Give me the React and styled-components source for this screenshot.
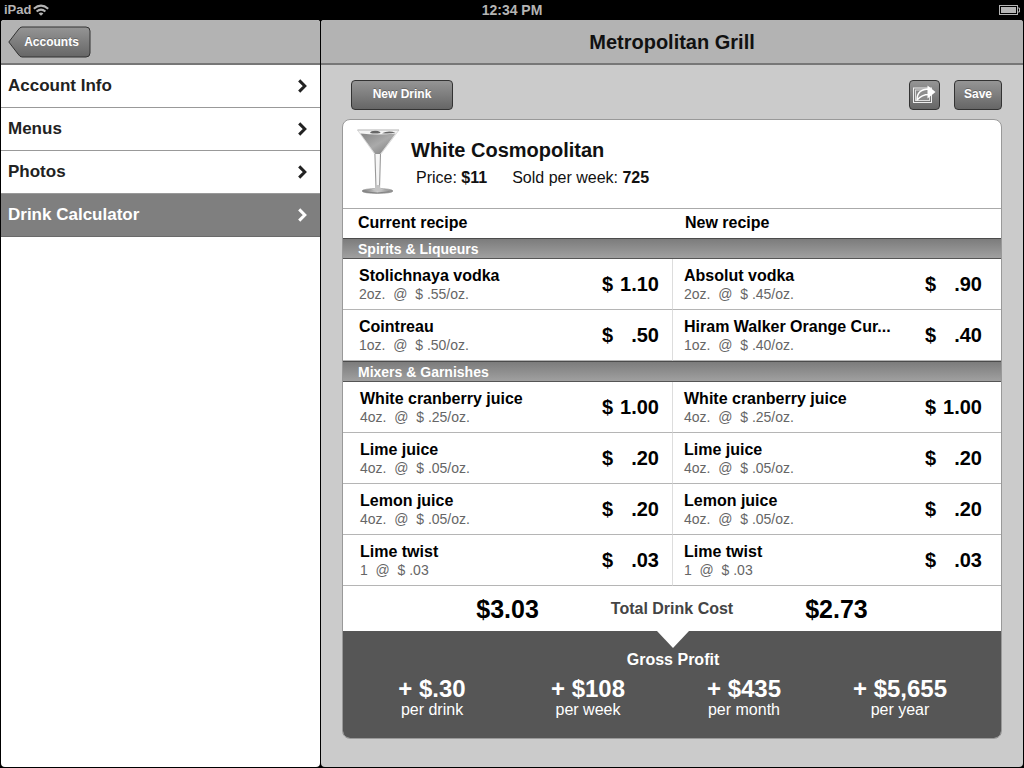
import React from 'react';
import styled, { createGlobalStyle } from 'styled-components';

const GlobalStyle = createGlobalStyle`
  *, *::before, *::after { box-sizing: border-box; }
  html, body, #root { height: 100%; }
  body {
    margin: 0;
    background: #000;
    color: #111;
    font-family: "Liberation Sans", Arial, sans-serif;
  }
  h1, h2, h3, p, dl, dd, ul { margin: 0; padding: 0; }
`;

const Screen = styled.div`
  display: flex;
  flex-direction: column;
  min-height: 100%;
`;

const StatusBar = styled.header`
  display: grid;
  grid-template-columns: 1fr auto 1fr;
  align-items: center;
  height: 20px;
  padding: 0 4px 1px;
  color: #b4b4b4;
  font-size: 14px;
  line-height: 18px;
`;

const Carrier = styled.div`
  display: flex;
  align-items: center;
  gap: 2px;
  font-size: 13px;
  font-weight: bold;
`;

const Clock = styled.time`
  font-weight: bold;
`;

const BatteryIcon = styled.svg`
  justify-self: end;
`;

const Split = styled.div`
  flex: 1;
  display: grid;
  grid-template-columns: 319px 1fr;
  gap: 1px;
  padding: 0 1px 1px;
`;

const Sidebar = styled.aside`
  background: #fff;
  border-radius: 3px 3px 4px 4px;
  overflow: hidden;
`;

const Main = styled.main`
  background: #cbcbcb;
  border-radius: 3px 3px 4px 4px;
  overflow: hidden;
`;

const TitleBar = styled.div`
  display: flex;
  align-items: center;
  justify-content: ${(p) => (p.$centered ? 'center' : 'flex-start')};
  height: 45px;
  padding: 0 7px;
  border-bottom: 2px solid #777;
  background: #b3b3b3;
`;

const Title = styled.h1`
  font-size: 20px;
  line-height: 24px;
`;

const BackButton = styled.button`
  position: relative;
  width: 83px;
  height: 32px;
  padding: 0 0 0 4px;
  border: 0;
  background: none;
  color: #fff;
  font: bold 12px/16px "Liberation Sans", Arial, sans-serif;
  text-shadow: 0 -1px 0 #666;
`;

const BackShape = styled.svg`
  position: absolute;
  inset: 0;
`;

const BackLabel = styled.span`
  position: relative;
`;

const NavList = styled.ul`
  list-style: none;
`;

const NavLink = styled.a`
  display: flex;
  align-items: center;
  justify-content: space-between;
  height: 43px;
  padding: 0 13px 0 7px;
  border-bottom: 1px solid ${(p) => (p.$active ? '#6a6a6a' : '#999')};
  background: ${(p) => (p.$active ? '#7f7f7f' : '#fff')};
  color: ${(p) => (p.$active ? '#fff' : '#222')};
  font-size: 17px;
  font-weight: bold;
  line-height: 20px;
  text-decoration: none;
`;

const Content = styled.div`
  padding: 15px 21px 28px;
`;

const Toolbar = styled.div`
  display: flex;
  align-items: center;
  gap: 14px;
  padding: 0 0 9px 9px;
`;

const ToolButton = styled.button`
  display: flex;
  align-items: center;
  justify-content: center;
  width: ${(p) => p.$width};
  height: 30px;
  padding: 0 0 2px;
  border: 1px solid #333;
  border-radius: 4px;
  background: linear-gradient(#959595, #666);
  color: #fff;
  font: bold 12px/16px "Liberation Sans", Arial, sans-serif;
  text-shadow: 0 -1px 0 #666;
`;

const Spacer = styled.div`
  flex: 1;
`;

const Card = styled.section`
  overflow: hidden;
  border: 1px solid #999;
  border-radius: 8px;
  background: #fff;
`;

const DrinkHeader = styled.div`
  display: flex;
  gap: 10px;
  height: 88px;
  padding: 8px 14px;
`;

const DrinkText = styled.div`
  padding-top: 10px;
`;

const DrinkName = styled.h2`
  font-size: 20px;
  line-height: 24px;
`;

const DrinkFacts = styled.p`
  display: flex;
  gap: 25px;
  padding: 6px 0 0 5px;
  font-size: 16px;
  line-height: 20px;
`;

const RecipeTable = styled.table`
  width: 100%;
  border-collapse: separate;
  border-spacing: 0;
  table-layout: fixed;
`;

const ColumnHead = styled.th`
  height: 30px;
  padding: 0 15px 2px;
  border-top: 1px solid #aaa;
  color: #000;
  font-size: 16px;
  line-height: 20px;
  text-align: left;

  & + & {
    padding-left: 13px;
  }
`;

const SectionHead = styled.th`
  height: 21px;
  padding: 0 15px;
  border-top: 1px solid #4b4b4b;
  border-bottom: 1px solid #555;
  background: linear-gradient(#7c7c7c, #a0a0a0);
  color: #fff;
  font-size: 14px;
  line-height: 16px;
  text-align: left;
`;

const IngredientCell = styled.td`
  height: 51px;
  padding: ${(p) => (p.$inset ? '0 13px 0 17px' : '0 13px 0 16px')};
  border-bottom: 1px solid #b5b5b5;

  & + & {
    padding: ${(p) => (p.$inset ? '0 19px 0 11px' : '0 19px 0 10px')};
    border-left: 1px solid #ddd;
  }
`;

const Ingredient = styled.div`
  display: flex;
  align-items: center;
  justify-content: space-between;
`;

const IngredientName = styled.div`
  color: #000;
  font-size: 16px;
  font-weight: bold;
  line-height: 20px;
`;

const Quantity = styled.div`
  color: #666;
  font-size: 14px;
  line-height: 16px;
  white-space: pre;
`;

const Price = styled.div`
  display: flex;
  justify-content: space-between;
  width: 57px;
  color: #000;
  font-size: 20px;
  font-weight: bold;
  line-height: 24px;
`;

const Totals = styled.div`
  display: grid;
  grid-template-columns: 1fr auto 1fr;
  align-items: center;
  gap: 72px;
  height: 45px;
`;

const TotalLabel = styled.h3`
  color: #444;
  font-size: 16px;
  line-height: 20px;
`;

const TotalValue = styled.div`
  color: #000;
  font-size: 25px;
  font-weight: bold;
  line-height: 28px;
  text-align: ${(p) => p.$align};
`;

const Profit = styled.div`
  position: relative;
  height: 107px;
  padding: 19px 23px 0 11px;
  background: #565656;
  color: #fff;

  &::before {
    content: "";
    position: absolute;
    top: 0;
    left: 50%;
    margin-left: -15px;
    border: 16px solid transparent;
    border-top: 17px solid #fff;
    border-bottom: 0;
  }
`;

const ProfitTitle = styled.h3`
  padding-left: 14px;
  font-size: 16px;
  line-height: 20px;
  text-align: center;
`;

const ProfitList = styled.dl`
  display: grid;
  grid-template-columns: repeat(4, 1fr);
  padding-top: 6px;
`;

const ProfitItem = styled.div`
  display: flex;
  flex-direction: column-reverse;
  text-align: center;
`;

const ProfitPeriod = styled.dt`
  font-size: 16px;
  line-height: 16px;
`;

const ProfitValue = styled.dd`
  font-size: 24px;
  font-weight: bold;
  line-height: 26px;
`;

const NAV = ['Account Info', 'Menus', 'Photos', 'Drink Calculator'];

const SECTIONS = [
  {
    title: 'Spirits & Liqueurs',
    rows: [
      [['Stolichnaya vodka', '2oz.  @  $ .55/oz.', '1.10'], ['Absolut vodka', '2oz.  @  $ .45/oz.', '.90']],
      [['Cointreau', '1oz.  @  $ .50/oz.', '.50'], ['Hiram Walker Orange Cur...', '1oz.  @  $ .40/oz.', '.40']],
    ],
  },
  {
    title: 'Mixers & Garnishes',
    inset: true,
    rows: [
      [['White cranberry juice', '4oz.  @  $ .25/oz.', '1.00'], ['White cranberry juice', '4oz.  @  $ .25/oz.', '1.00']],
      [['Lime juice', '4oz.  @  $ .05/oz.', '.20'], ['Lime juice', '4oz.  @  $ .05/oz.', '.20']],
      [['Lemon juice', '4oz.  @  $ .05/oz.', '.20'], ['Lemon juice', '4oz.  @  $ .05/oz.', '.20']],
      [['Lime twist', '1  @  $ .03', '.03'], ['Lime twist', '1  @  $ .03', '.03']],
    ],
  },
];

const PROFITS = [
  ['+ $.30', 'per drink'],
  ['+ $108', 'per week'],
  ['+ $435', 'per month'],
  ['+ $5,655', 'per year'],
];

function Wifi() {
  return (
    <svg width="16" height="12" viewBox="0 0 16 12" fill="none" stroke="#b4b4b4" strokeWidth="2" aria-hidden="true">
      <path d="M0.8 4.8Q8 -1.6 15.2 4.8" />
      <path d="M3.6 7.6Q8 3.6 12.4 7.6" />
      <path d="M5.6 9.4Q8 7.4 10.4 9.4L8 11.8Z" fill="#b4b4b4" stroke="none" />
    </svg>
  );
}

function Battery() {
  return (
    <BatteryIcon width="21" height="10" viewBox="0 0 21 10" role="img" aria-label="Battery full">
      <rect x="0.5" y="0.5" width="18" height="9" fill="none" stroke="#b4b4b4" />
      <rect x="2" y="2" width="15" height="6" fill="#b4b4b4" />
      <path d="M19 3h1.5v4H19" fill="none" stroke="#b4b4b4" />
    </BatteryIcon>
  );
}

function Chevron() {
  return (
    <svg width="9" height="14" viewBox="0 0 9 14" fill="none" stroke="currentColor" strokeWidth="3" aria-hidden="true">
      <path d="M1.2 1.4L6.8 7L1.2 12.6" />
    </svg>
  );
}

function ShareIcon() {
  return (
    <svg width="25" height="20" viewBox="0 0 25 20" aria-hidden="true">
      <rect x="1.500" y="4" width="18" height="14.500" fill="none" stroke="#eee" />
      <rect x="3.500" y="6" width="14" height="10.500" fill="#8a8a8a" stroke="#ddd" />
      <path d="M5 16C5 8.500 9.500 5 17 5V10.500C12 10.500 8.500 12 5 16Z" fill="#8e8e8e" stroke="#fff" strokeWidth="1.400" strokeLinejoin="round" />
      <path d="M15.500 1.500L23.500 8L15.500 14.500Z" fill="#fff" />
    </svg>
  );
}

function Cocktail() {
  return (
    <svg width="44" height="68" viewBox="0 0 44 68" role="img" aria-label="White Cosmopolitan in a martini glass">
      <defs>
        <linearGradient id="liquid" x1="0" y1="0" x2="1" y2="1">
          <stop offset="0" stopColor="#858585" />
          <stop offset="0.5" stopColor="#aaa" />
          <stop offset="1" stopColor="#777" />
        </linearGradient>
        <linearGradient id="foot" x1="0" y1="0" x2="1" y2="0">
          <stop offset="0" stopColor="#777" />
          <stop offset="0.5" stopColor="#ccc" />
          <stop offset="1" stopColor="#888" />
        </linearGradient>
      </defs>
      <path d="M0.500 2L18 26.500H23.500L42 2Z" fill="#f4f4f4" stroke="#ccc" strokeWidth="0.700" />
      <path d="M3.500 5.500L18.300 26H23.200L38.500 5.500Q21 7.500 3.500 5.500Z" fill="url(#liquid)" />
      <path d="M13 5Q14 2.500 19 2.800Q23 3 23.500 5Q18 6 13 5ZM25 5.200Q31 2.200 38.500 4.500Q32 6.200 25 5.200Z" fill="#666" />
      <path d="M0.500 2H42" stroke="#bbb" strokeWidth="0.800" />
      <path d="M17.800 26L18.800 60H22.600L23.600 26Z" fill="#f6f6f6" />
      <path d="M17.900 26L19 60M23.500 26L22.500 60" fill="none" stroke="#999" strokeWidth="1.100" />
      <ellipse cx="20.500" cy="63" rx="15.500" ry="2.500" fill="url(#foot)" stroke="#999" strokeWidth="0.700" />
      <path d="M14.500 61.800Q19 61 19.200 57H22.600Q22.600 61 27 61.800Q21 64 14.500 61.800Z" fill="#c4c4c4" />
      <path d="M8.500 64Q20 66 32.500 63.800" fill="none" stroke="#777" strokeWidth="0.800" />
    </svg>
  );
}

function RecipeCell({ item: [name, quantity, price], inset }) {
  return (
    <IngredientCell $inset={inset}>
      <Ingredient>
        <div>
          <IngredientName>{name}</IngredientName>
          <Quantity>{quantity}</Quantity>
        </div>
        <Price><span>$</span><span>{price}</span></Price>
      </Ingredient>
    </IngredientCell>
  );
}

export default function App() {
  return (
    <Screen>
      <GlobalStyle />
      <StatusBar>
        <Carrier>iPad<Wifi /></Carrier>
        <Clock>12:34 PM</Clock>
        <Battery />
      </StatusBar>
      <Split>
        <Sidebar>
          <TitleBar>
            <BackButton type="button">
              <BackShape width="83" height="32" viewBox="0 0 83 32" aria-hidden="true">
                <defs>
                  <linearGradient id="back" x1="0" y1="0" x2="0" y2="1">
                    <stop offset="0" stopColor="#959595" />
                    <stop offset="1" stopColor="#666" />
                  </linearGradient>
                </defs>
                <path d="M14 1H78Q82 1 82 5V27Q82 31 78 31H14Q12 31 10 28L0.800 16L10 4Q12 1 14 1Z" fill="url(#back)" stroke="#333" />
              </BackShape>
              <BackLabel>Accounts</BackLabel>
            </BackButton>
          </TitleBar>
          <nav aria-label="Account">
            <NavList>
              {NAV.map((label) => (
                <li key={label}>
                  <NavLink href="#" $active={label === 'Drink Calculator'}>
                    {label}
                    <Chevron />
                  </NavLink>
                </li>
              ))}
            </NavList>
          </nav>
        </Sidebar>
        <Main>
          <TitleBar $centered>
            <Title>Metropolitan Grill</Title>
          </TitleBar>
          <Content>
            <Toolbar>
              <ToolButton type="button" $width="102px">New Drink</ToolButton>
              <Spacer />
              <ToolButton type="button" $width="31px" aria-label="Share"><ShareIcon /></ToolButton>
              <ToolButton type="button" $width="48px">Save</ToolButton>
            </Toolbar>
            <Card>
              <DrinkHeader>
                <Cocktail />
                <DrinkText>
                  <DrinkName>White Cosmopolitan</DrinkName>
                  <DrinkFacts>
                    <span>Price: <b>$11</b></span>
                    <span>Sold per week: <b>725</b></span>
                  </DrinkFacts>
                </DrinkText>
              </DrinkHeader>
              <RecipeTable>
                <thead>
                  <tr>
                    <ColumnHead scope="col">Current recipe</ColumnHead>
                    <ColumnHead scope="col">New recipe</ColumnHead>
                  </tr>
                </thead>
                {SECTIONS.map((section) => (
                  <tbody key={section.title}>
                    <tr>
                      <SectionHead colSpan={2} scope="rowgroup">{section.title}</SectionHead>
                    </tr>
                    {section.rows.map(([current, next]) => (
                      <tr key={current[0]}>
                        <RecipeCell item={current} inset={section.inset} />
                        <RecipeCell item={next} inset={section.inset} />
                      </tr>
                    ))}
                  </tbody>
                ))}
              </RecipeTable>
              <Totals>
                <TotalValue $align="right">$3.03</TotalValue>
                <TotalLabel>Total Drink Cost</TotalLabel>
                <TotalValue $align="left">$2.73</TotalValue>
              </Totals>
              <Profit>
                <ProfitTitle>Gross Profit</ProfitTitle>
                <ProfitList>
                  {PROFITS.map(([value, period]) => (
                    <ProfitItem key={period}>
                      <ProfitPeriod>{period}</ProfitPeriod>
                      <ProfitValue>{value}</ProfitValue>
                    </ProfitItem>
                  ))}
                </ProfitList>
              </Profit>
            </Card>
          </Content>
        </Main>
      </Split>
    </Screen>
  );
}
